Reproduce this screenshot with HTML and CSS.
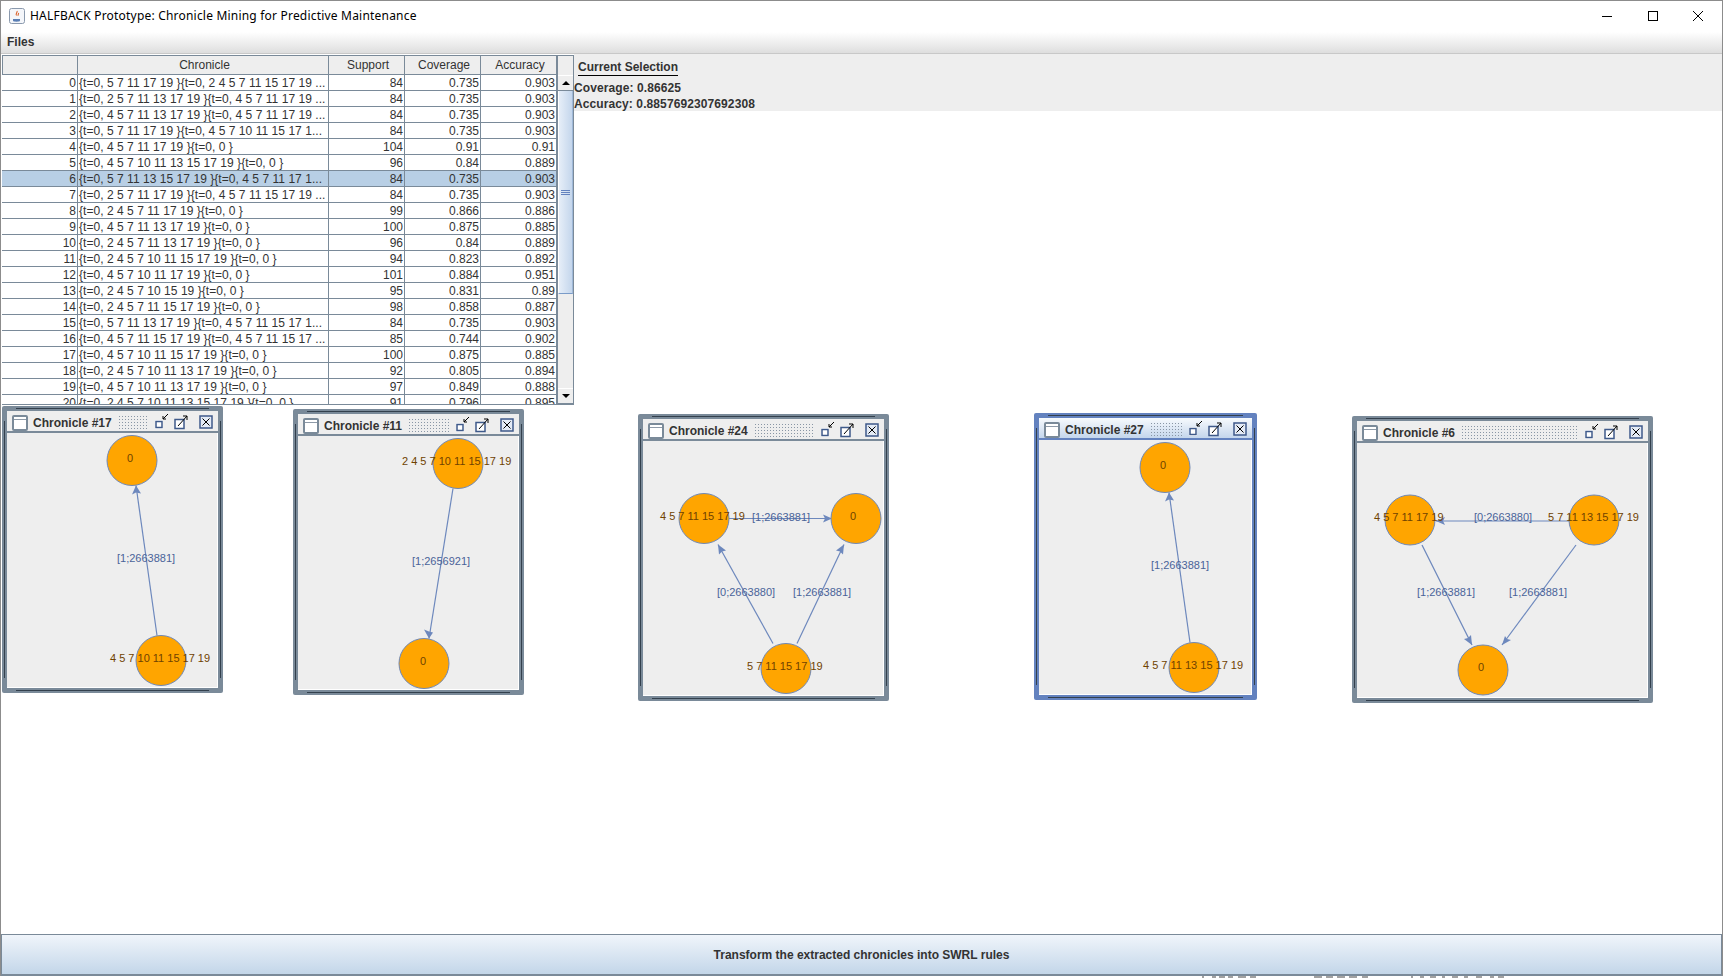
FILE: index.html
```html
<!DOCTYPE html>
<html lang="en">

<head>
    <meta charset="UTF-8">
    <title>HALFBACK Prototype</title>
    <link rel="stylesheet" href="styles.css">
</head>

<body>
    <div class="window">
        <header class="title-bar">
            <svg class="app-icon" width="16" height="16" viewBox="0 0 16 16">
                <rect x="0.5" y="0.5" width="15" height="15" rx="2" fill="#f4f6fa" stroke="#8a99ad" />
                <path d="M4 11h7v1.5c0 .8-1 1.2-3.500 1.200S4 13.300 4 12.500z" fill="#5a7fb5" />
                <path d="M8 3c1 1.500-2 2.500-.5 4.500M9.500 5c.5 1-1 1.500-.3 2.800" fill="none" stroke="#d9622b" stroke-width="1.100" />
            </svg>
            <span class="title-text">HALFBACK Prototype: Chronicle Mining for Predictive Maintenance</span>
            <div class="win-buttons">
                <svg width="12" height="12" viewBox="0 0 12 12"><path d="M1 6.500h10" stroke="#000" /></svg>
                <svg width="12" height="12" viewBox="0 0 12 12"><rect x="1.500" y="1.500" width="9" height="9" fill="none" stroke="#000" /></svg>
                <svg width="12" height="12" viewBox="0 0 12 12"><path d="M1 1l10 10M11 1L1 11" stroke="#000" /></svg>
            </div>
        </header>

        <nav class="menu-bar"><span class="menu-item">Files</span></nav>

        <main class="desktop">
            <div class="top-row">
                <div class="table-wrap">
                    <div class="table-clip">
                        <table class="chron-table">
                            <thead>
                                <tr>
                                    <th class="col-id"></th>
                                    <th class="col-name">Chronicle</th>
                                    <th class="col-num">Support</th>
                                    <th class="col-num">Coverage</th>
                                    <th class="col-num">Accuracy</th>
                                </tr>
                            </thead>
                            <tbody>
                                <tr><td class="num">0</td><td class="name">{t=0, 5 7 11 17 19 }{t=0, 2 4 5 7 11 15 17 19 ...</td><td class="num">84</td><td class="num">0.735</td><td class="num">0.903</td></tr>
                                <tr><td class="num">1</td><td class="name">{t=0, 2 5 7 11 13 17 19 }{t=0, 4 5 7 11 17 19 ...</td><td class="num">84</td><td class="num">0.735</td><td class="num">0.903</td></tr>
                                <tr><td class="num">2</td><td class="name">{t=0, 4 5 7 11 13 17 19 }{t=0, 4 5 7 11 17 19 ...</td><td class="num">84</td><td class="num">0.735</td><td class="num">0.903</td></tr>
                                <tr><td class="num">3</td><td class="name">{t=0, 5 7 11 17 19 }{t=0, 4 5 7 10 11 15 17 1...</td><td class="num">84</td><td class="num">0.735</td><td class="num">0.903</td></tr>
                                <tr><td class="num">4</td><td class="name">{t=0, 4 5 7 11 17 19 }{t=0, 0 }</td><td class="num">104</td><td class="num">0.91</td><td class="num">0.91</td></tr>
                                <tr><td class="num">5</td><td class="name">{t=0, 4 5 7 10 11 13 15 17 19 }{t=0, 0 }</td><td class="num">96</td><td class="num">0.84</td><td class="num">0.889</td></tr>
                                <tr class="selected"><td class="num">6</td><td class="name">{t=0, 5 7 11 13 15 17 19 }{t=0, 4 5 7 11 17 1...</td><td class="num">84</td><td class="num">0.735</td><td class="num">0.903</td></tr>
                                <tr><td class="num">7</td><td class="name">{t=0, 2 5 7 11 17 19 }{t=0, 4 5 7 11 15 17 19 ...</td><td class="num">84</td><td class="num">0.735</td><td class="num">0.903</td></tr>
                                <tr><td class="num">8</td><td class="name">{t=0, 2 4 5 7 11 17 19 }{t=0, 0 }</td><td class="num">99</td><td class="num">0.866</td><td class="num">0.886</td></tr>
                                <tr><td class="num">9</td><td class="name">{t=0, 4 5 7 11 13 17 19 }{t=0, 0 }</td><td class="num">100</td><td class="num">0.875</td><td class="num">0.885</td></tr>
                                <tr><td class="num">10</td><td class="name">{t=0, 2 4 5 7 11 13 17 19 }{t=0, 0 }</td><td class="num">96</td><td class="num">0.84</td><td class="num">0.889</td></tr>
                                <tr><td class="num">11</td><td class="name">{t=0, 2 4 5 7 10 11 15 17 19 }{t=0, 0 }</td><td class="num">94</td><td class="num">0.823</td><td class="num">0.892</td></tr>
                                <tr><td class="num">12</td><td class="name">{t=0, 4 5 7 10 11 17 19 }{t=0, 0 }</td><td class="num">101</td><td class="num">0.884</td><td class="num">0.951</td></tr>
                                <tr><td class="num">13</td><td class="name">{t=0, 2 4 5 7 10 15 19 }{t=0, 0 }</td><td class="num">95</td><td class="num">0.831</td><td class="num">0.89</td></tr>
                                <tr><td class="num">14</td><td class="name">{t=0, 2 4 5 7 11 15 17 19 }{t=0, 0 }</td><td class="num">98</td><td class="num">0.858</td><td class="num">0.887</td></tr>
                                <tr><td class="num">15</td><td class="name">{t=0, 5 7 11 13 17 19 }{t=0, 4 5 7 11 15 17 1...</td><td class="num">84</td><td class="num">0.735</td><td class="num">0.903</td></tr>
                                <tr><td class="num">16</td><td class="name">{t=0, 4 5 7 11 15 17 19 }{t=0, 4 5 7 11 15 17 ...</td><td class="num">85</td><td class="num">0.744</td><td class="num">0.902</td></tr>
                                <tr><td class="num">17</td><td class="name">{t=0, 4 5 7 10 11 15 17 19 }{t=0, 0 }</td><td class="num">100</td><td class="num">0.875</td><td class="num">0.885</td></tr>
                                <tr><td class="num">18</td><td class="name">{t=0, 2 4 5 7 10 11 13 17 19 }{t=0, 0 }</td><td class="num">92</td><td class="num">0.805</td><td class="num">0.894</td></tr>
                                <tr><td class="num">19</td><td class="name">{t=0, 4 5 7 10 11 13 17 19 }{t=0, 0 }</td><td class="num">97</td><td class="num">0.849</td><td class="num">0.888</td></tr>
                                <tr><td class="num">20</td><td class="name">{t=0, 2 4 5 7 10 11 13 15 17 19 }{t=0, 0 }</td><td class="num">91</td><td class="num">0.796</td><td class="num">0.895</td></tr>
                            </tbody>
                        </table>
                    </div>
                    <div class="scrollbar">
                        <div class="scroll-corner"></div>
                        <div class="scroll-btn"><span class="arrow-up"></span></div>
                        <div class="scroll-track">
                            <div class="scroll-thumb"><span class="grip"></span></div>
                        </div>
                        <div class="scroll-btn"><span class="arrow-down"></span></div>
                    </div>
                </div>
                <section class="selection">
                    <h4 class="selection-title">Current Selection</h4>
                    <p>Coverage: 0.86625</p>
                    <p>Accuracy: 0.8857692307692308</p>
                </section>
            </div>

            <div class="frame frame-17">
                <div class="frame-title">
                    <span class="frame-icon"></span>
                    <span class="frame-name">Chronicle #17</span>
                    <span class="frame-dots"></span>
                    <svg class="frame-btns" width="58" height="16" viewBox="0 0 58 16">
                        <use href="#frame-buttons" />
                    </svg>
                </div>
                <svg class="graph" viewBox="7 433 210 253">
                    <g class="edge">
                        <line x1="157" y1="635" x2="136" y2="485" />
                        <path d="M136 485l-4 9 4-2 5 1z" />
                    </g>
                    <circle class="node" cx="132" cy="460" r="25" />
                    <circle class="node" cx="161" cy="660" r="25" />
                    <text class="node-label" x="130" y="462" text-anchor="middle">0</text>
                    <text class="node-label" x="110" y="662">4 5 7 10 11 15 17 19</text>
                    <text class="edge-label" x="117" y="562">[1;2663881]</text>
                </svg>
            </div>

            <div class="frame frame-11">
                <div class="frame-title">
                    <span class="frame-icon"></span>
                    <span class="frame-name">Chronicle #11</span>
                    <span class="frame-dots"></span>
                    <svg class="frame-btns" width="58" height="16" viewBox="0 0 58 16">
                        <use href="#frame-buttons" />
                    </svg>
                </div>
                <svg class="graph" viewBox="298 436 220 252">
                    <g class="edge">
                        <line x1="453" y1="488" x2="429" y2="638" />
                        <path d="M429 638l-5-9 5 2 4 1z" />
                    </g>
                    <circle class="node" cx="458" cy="463" r="25" />
                    <circle class="node" cx="424" cy="663" r="25" />
                    <text class="node-label" x="402" y="465">2 4 5 7 10 11 15 17 19</text>
                    <text class="node-label" x="423" y="665" text-anchor="middle">0</text>
                    <text class="edge-label" x="412" y="565">[1;2656921]</text>
                </svg>
            </div>

            <div class="frame frame-24">
                <div class="frame-title">
                    <span class="frame-icon"></span>
                    <span class="frame-name">Chronicle #24</span>
                    <span class="frame-dots"></span>
                    <svg class="frame-btns" width="58" height="16" viewBox="0 0 58 16">
                        <use href="#frame-buttons" />
                    </svg>
                </div>
                <svg class="graph" viewBox="643 441 240 253">
                    <g class="edge">
                        <line x1="729" y1="518" x2="832" y2="518" />
                        <path d="M832 518l-9-4 2 4-2 4z" />
                        <line x1="773" y1="643" x2="718" y2="544" />
                        <path d="M718 544l1 10 3-3 4-1z" />
                        <line x1="797" y1="643" x2="844" y2="544" />
                        <path d="M844 544l-8 6 4 1 3 3z" />
                    </g>
                    <circle class="node" cx="704" cy="518" r="25" />
                    <circle class="node" cx="856" cy="518" r="25" />
                    <circle class="node" cx="786" cy="668" r="25" />
                    <text class="node-label" x="660" y="520">4 5 7 11 15 17 19</text>
                    <text class="node-label" x="853" y="520" text-anchor="middle">0</text>
                    <text class="node-label" x="747" y="670">5 7 11 15 17 19</text>
                    <text class="edge-label" x="752" y="521">[1;2663881]</text>
                    <text class="edge-label" x="717" y="596">[0;2663880]</text>
                    <text class="edge-label" x="793" y="596">[1;2663881]</text>
                </svg>
            </div>

            <div class="frame frame-27 active">
                <div class="frame-title">
                    <span class="frame-icon"></span>
                    <span class="frame-name">Chronicle #27</span>
                    <span class="frame-dots"></span>
                    <svg class="frame-btns" width="58" height="16" viewBox="0 0 58 16">
                        <use href="#frame-buttons" />
                    </svg>
                </div>
                <svg class="graph" viewBox="1039 440 212 253">
                    <g class="edge">
                        <line x1="1190" y1="642" x2="1169" y2="492" />
                        <path d="M1169 492l-4 9 4-2 5 1z" />
                    </g>
                    <circle class="node" cx="1165" cy="467" r="25" />
                    <circle class="node" cx="1194" cy="667" r="25" />
                    <text class="node-label" x="1163" y="469" text-anchor="middle">0</text>
                    <text class="node-label" x="1143" y="669">4 5 7 11 13 15 17 19</text>
                    <text class="edge-label" x="1151" y="569">[1;2663881]</text>
                </svg>
            </div>

            <div class="frame frame-6">
                <div class="frame-title">
                    <span class="frame-icon"></span>
                    <span class="frame-name">Chronicle #6</span>
                    <span class="frame-dots"></span>
                    <svg class="frame-btns" width="58" height="16" viewBox="0 0 58 16">
                        <use href="#frame-buttons" />
                    </svg>
                </div>
                <svg class="graph" viewBox="1357 444 290 252">
                    <g class="edge">
                        <line x1="1569" y1="521" x2="1436" y2="521" />
                        <path d="M1436 521l9 4-2-4 2-4z" />
                        <line x1="1422" y1="545" x2="1472" y2="645" />
                        <path d="M1472 645l-1-10-3 3-4 1z" />
                        <line x1="1576" y1="545" x2="1502" y2="645" />
                        <path d="M1502 645l9-5-4-1-2-3z" />
                    </g>
                    <circle class="node" cx="1410" cy="520" r="25" />
                    <circle class="node" cx="1594" cy="520" r="25" />
                    <circle class="node" cx="1483" cy="670" r="25" />
                    <text class="node-label" x="1374" y="522">4 5 7 11 17 19</text>
                    <text class="node-label" x="1548" y="522">5 7 11 13 15 17 19</text>
                    <text class="node-label" x="1481" y="672" text-anchor="middle">0</text>
                    <text class="edge-label" x="1474" y="522">[0;2663880]</text>
                    <text class="edge-label" x="1417" y="597">[1;2663881]</text>
                    <text class="edge-label" x="1509" y="597">[1;2663881]</text>
                </svg>
            </div>
        </main>

        <button class="transform-btn">Transform the extracted chronicles into SWRL rules</button>
    </div>

    <!-- the sliver of another window showing under this one -->
    <svg class="behind" width="1723" height="2" viewBox="0 0 1723 2">
        <path d="M1203 0v2M1212 1h4M1219 1h6M1228 1h5M1238 1h8M1250 1h6M1314 1h8M1326 1h7M1337 1h8M1349 1h8M1362 1h6M1412 0v2M1420 1h4M1430 1h6M1442 1h3M1452 1h6M1464 1h4M1476 1h6M1490 1h4M1498 1h6" stroke="#444" />
    </svg>

    <svg class="defs" width="0" height="0">
        <defs>
            <g id="frame-buttons">
                <rect x="0" y="5" width="8" height="9" fill="#fff" />
                <rect x="1" y="6.500" width="6" height="6" fill="#fff" stroke="#3f5a8a" stroke-width="1.500" />
                <path d="M8 4l5-5M8 4h3M8 4v-3" fill="none" stroke="#000" />
                <rect x="20" y="4.500" width="9" height="9" fill="#fff" stroke="#3f5a8a" stroke-width="1.500" />
                <path d="M23 11l9-10M32 1h-4M32 1v4" fill="none" stroke="#000" />
                <rect x="45" y="1" width="12" height="12" fill="#e4ebf6" stroke="#3f5a8a" stroke-width="1.500" />
                <path d="M47.500 3.500l7 7M54.500 3.500l-7 7" fill="none" stroke="#000" />
            </g>
        </defs>
    </svg>
</body>

</html>
```

FILE: styles.css
```css
* {
    margin: 0;
    padding: 0;
    box-sizing: border-box;
}

html,
body {
    height: 100%;
    overflow: hidden;
    background: #fff;
}

body {
    font-family: "Liberation Sans", Arial, sans-serif;
    font-size: 12px;
    color: #333;
}

.window {
    display: flex;
    flex-direction: column;
    height: 976px;
    border-left: 1px solid #8c8c8c;
    border-right: 1px solid #8c8c8c;
    border-top: 1px solid #8c8c8c;
}

.title-bar {
    display: flex;
    align-items: center;
    height: 31px;
    padding-left: 8px;
    padding-bottom: 2px;
    background: #fff;
}

.app-icon {
    margin-right: 5px;
}

.title-text {
    font-family: "Noto Sans", sans-serif;
    font-size: 12px;
    letter-spacing: .2px;
    color: #000;
}

.win-buttons {
    display: flex;
    gap: 33.500px;
    margin-left: auto;
    margin-right: 18px;
}

.menu-bar {
    display: flex;
    align-items: center;
    height: 22px;
    padding-left: 6px;
    padding-bottom: 2px;
    background: linear-gradient(to bottom, #fff, #dedede);
    border-bottom: 1px solid #c8c8c8;
}

.menu-item {
    font-weight: 700;
    color: #333;
}

.desktop {
    position: relative;
    flex: 1;
    background: #fff;
}

.top-row {
    display: flex;
    align-items: flex-start;
}

.table-wrap {
    display: flex;
    width: 572px;
    height: 350px;
    margin-top: 1px;
    margin-left: 1px;
    border-right: 1px solid #7a8a99;
    border-bottom: 1px solid #7a8a99;
}

.table-clip {
    width: 555px;
    height: 349px;
    overflow: hidden;
}

.chron-table {
    width: 555px;
    table-layout: fixed;
    border-collapse: separate;
    border-spacing: 0;
    font-size: 12px;
}

.chron-table th {
    height: 20px;
    padding-left: 3px;
    font-weight: 400;
    background: #eee;
    border-top: 1px solid #7a8a99;
    border-right: 1px solid #7a8a99;
    border-bottom: 1px solid #7a8a99;
    text-align: center;
}

.col-id {
    width: 76px;
    border-left: 1px solid #7a8a99;
}

.col-name {
    width: 251px;
}

.col-num {
    width: 76px;
}

.chron-table td {
    height: 16px;
    padding: 1px 2px 0;
    line-height: 14px;
    white-space: nowrap;
    overflow: hidden;
    border-right: 1px solid #7a8a99;
    border-bottom: 1px solid #7a8a99;
}

.chron-table td.num {
    text-align: right;
    padding-right: 1px;
}

.chron-table td.name {
    padding-left: 1px;
    letter-spacing: .04px;
}

.selected td {
    background: #b8cfe5;
}

.scrollbar {
    display: flex;
    flex-direction: column;
    width: 16px;
    height: 349px;
    background: #eee;
    border-left: 1px solid #7a8a99;
}

.scroll-corner {
    height: 20px;
    border-top: 1px solid #7a8a99;
    flex: none;
}

.scroll-btn {
    display: flex;
    align-items: center;
    justify-content: center;
    height: 16px;
    flex: none;
    background: #eee;
    border-top: 1px solid #fff;
    border-bottom: 1px solid #7a8a99;
}

.arrow-up {
    width: 0;
    height: 0;
    border-left: 4px solid transparent;
    border-right: 4px solid transparent;
    border-bottom: 4px solid #000;
}

.arrow-down {
    width: 0;
    height: 0;
    border-left: 4px solid transparent;
    border-right: 4px solid transparent;
    border-top: 4px solid #000;
}

.scroll-track {
    flex: 1;
    background: #eee;
}

.scroll-thumb {
    display: flex;
    align-items: center;
    justify-content: center;
    height: 203px;
    background: linear-gradient(to right, #e6eef8, #c4d6ec);
    border-bottom: 1px solid #7a9bc8;
    border-left: 1px solid #fff;
    border-right: 1px solid #9fb8d8;
}

.grip {
    width: 9px;
    height: 5px;
    border-top: 1px solid #6382bf;
    border-bottom: 1px solid #6382bf;
    background: linear-gradient(#6382bf, #6382bf) center / 100% 1px no-repeat;
}

.selection {
    flex: 1;
    height: 57px;
    padding-top: 5px;
    background: #eee;
    font-weight: 700;
    line-height: 16px;
    letter-spacing: .1px;
}

.selection-title {
    display: inline-block;
    margin-left: 4px;
    margin-bottom: 4px;
    font-size: 12px;
    letter-spacing: 0;
    border-bottom: 1px solid #000;
}

/* internal frames */
.frame {
    position: absolute;
    display: flex;
    flex-direction: column;
    padding: 5px;
    background:
        linear-gradient(#33404d, #33404d) 2px 15px / 1px calc(100% - 30px) no-repeat,
        linear-gradient(#33404d, #33404d) calc(100% - 2px) 15px / 1px calc(100% - 30px) no-repeat,
        #7a8a99;
    border-radius: 2px;
}

.frame.active {
    background:
        linear-gradient(#33404d, #33404d) 2px 15px / 1px calc(100% - 30px) no-repeat,
        linear-gradient(#33404d, #33404d) calc(100% - 2px) 15px / 1px calc(100% - 30px) no-repeat,
        #6382bf;
}

.frame::before,
.frame::after {
    content: "";
    position: absolute;
    left: 14px;
    right: 14px;
    height: 1px;
    background: #33404d;
}

.frame::before {
    top: 2px;
}

.frame::after {
    bottom: 2px;
}

.frame-17 {
    left: 1px;
    top: 352px;
    width: 221px;
    height: 287px;
}

.frame-11 {
    left: 292px;
    top: 355px;
    width: 231px;
    height: 286px;
}

.frame-24 {
    left: 637px;
    top: 360px;
    width: 251px;
    height: 287px;
}

.frame-27 {
    left: 1033px;
    top: 359px;
    width: 223px;
    height: 287px;
}

.frame-6 {
    left: 1351px;
    top: 362px;
    width: 301px;
    height: 287px;
}

.frame-title {
    display: flex;
    align-items: center;
    flex: none;
    height: 22px;
    padding: 3px 5px 0 5px;
    background: #eee;
    border-bottom: 2px solid #7a8a99;
}

.active .frame-title {
    background: linear-gradient(to bottom, #f7fafd, #c4d6ec);
    border-bottom-color: #6382bf;
}

.frame-icon {
    flex: none;
    width: 16px;
    height: 16px;
    margin-right: 5px;
    background: linear-gradient(#8e9aa8, #8e9aa8) 0 2px / 100% 1px no-repeat, #fff;
    border: 2px solid #7a8a99;
    border-radius: 2px;
}

.frame-name {
    flex: none;
    font-weight: 700;
    color: #333;
}

.frame-dots {
    flex: 1;
    height: 15px;
    margin: 0 6px;
    background: radial-gradient(circle, #8996a5 0.7px, transparent 0.9px) 0 0 / 3px 3px;
}

.frame-btns {
    flex: none;
    overflow: visible;
}

.graph {
    display: block;
    flex: 1;
    width: 100%;
    min-height: 0;
    background: #eee;
    border-right: 1px solid #fff;
    border-bottom: 1px solid #fff;
}

.edge line {
    stroke: #6d88bd;
    stroke-width: 1.2;
}

.edge path {
    fill: #6d88bd;
}

.node {
    fill: #ffa500;
    stroke: #7088b5;
    stroke-width: 1;
}

.node-label {
    font-size: 11px;
    fill: #6f4200;
    transform: translateY(-1px);
}

.edge-label {
    font-size: 11px;
    fill: #4a6399;
    transform: translateY(-1px);
}

.transform-btn {
    flex: none;
    height: 42px;
    width: 100%;
    font-family: "Liberation Sans", Arial, sans-serif;
    font-size: 12px;
    font-weight: 700;
    color: #333;
    background: linear-gradient(to bottom, #f0f5fb, #c3d6e9);
    border: 1px solid #7a8a99;
    border-bottom-width: 2px;
}

.behind {
    display: block;
}

.defs {
    position: absolute;
}
```
